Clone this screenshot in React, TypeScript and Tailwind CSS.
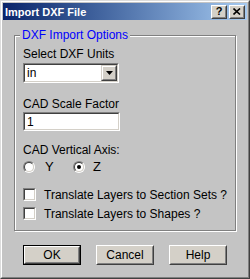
import type { FC, ReactNode } from "react"

// sunken 3D frame used by edit boxes, combo and checkboxes
const Sunken: FC<{ className?: string; children?: ReactNode }> = ({ className = "", children }) => (
    <div className={`border border-t-[#808080] border-l-[#808080] border-b-white border-r-white ${className}`}>
        <div className="w-full h-full border border-t-[#404040] border-l-[#404040] border-b-[#d4d0c8] border-r-[#d4d0c8] bg-white flex items-center">
            {children}
        </div>
    </div>
)

const Radio: FC<{ checked?: boolean }> = ({ checked }) => (
    <div className="w-[12px] h-[12px] rounded-full border border-t-[#808080] border-l-[#808080] border-b-white border-r-white">
        <div className="w-full h-full rounded-full border border-t-[#404040] border-l-[#404040] border-b-[#d4d0c8] border-r-[#d4d0c8] bg-white flex items-center justify-center">
            {checked && <div className="w-[4px] h-[4px] rounded-full bg-black" />}
        </div>
    </div>
)

const Button: FC<{ label: string; isDefault?: boolean }> = ({ label, isDefault }) => (
    <div className={`w-[58px] h-[20px] ${isDefault ? "border border-black" : ""}`}>
        <div className="w-full h-full border border-t-white border-l-white border-b-[#404040] border-r-[#404040] bg-[#d4d0c8]">
            <div className="w-full h-full border border-t-[#d4d0c8] border-l-[#d4d0c8] border-b-[#808080] border-r-[#808080] flex items-center justify-center text-black">
                {label}
            </div>
        </div>
    </div>
)

const CaptionButton: FC<{ children: ReactNode }> = ({ children }) => (
    <div className="w-[16px] h-[14px] border border-t-white border-l-white border-b-[#404040] border-r-[#404040] bg-[#d4d0c8]">
        <div className="w-full h-full border border-t-[#d4d0c8] border-l-[#d4d0c8] border-b-[#808080] border-r-[#808080] flex items-center justify-center">
            {children}
        </div>
    </div>
)

export default function App() {
    return (
        <div className="w-[250px] h-[279px] bg-[#c4c4c4] border border-t-[#dcdcdc] border-l-[#dcdcdc] border-b-[#404040] border-r-[#404040] font-['Liberation_Sans',Arial,sans-serif] text-[12px] leading-[14px] text-black">
            <div className="w-full h-full border border-t-white border-l-white border-b-[#808080] border-r-[#808080] p-[1px] flex flex-col">
                {/* title bar */}
                <div className="h-[17px] bg-gradient-to-r from-[#0a246a] to-[#a6caf0] flex items-center pl-[2px] pr-[2px]">
                    <span className="font-bold text-white text-[11px]">Import DXF File</span>
                    <div className="ml-auto flex gap-[2px]">
                        <CaptionButton>
                            <span className="font-bold text-[11px] leading-[11px]">?</span>
                        </CaptionButton>
                        <CaptionButton>
                            <svg width="8" height="7" viewBox="0 0 8 7">
                                <path d="M0.5 0.5 L7 6.5 M7 0.5 L0.5 6.5" stroke="#000" strokeWidth="1.6" />
                            </svg>
                        </CaptionButton>
                    </div>
                </div>

                {/* group box */}
                <fieldset className="mx-[11px] mt-[8px] border border-[#808080] shadow-[inset_1px_1px_0_#fff,1px_1px_0_#fff] px-[8px] pt-[5px] pb-[9px]">
                    <legend className="ml-[-3px] px-[2px] bg-[#c4c4c4] text-[#0000ff]">DXF Import Options</legend>

                    <div>Select DXF Units</div>
                    <Sunken className="mt-[2px] w-[96px] h-[20px]">
                        <span className="pl-[2px] flex-1">in</span>
                        <div className="w-[16px] h-full border border-t-[#d4d0c8] border-l-[#d4d0c8] border-b-[#404040] border-r-[#404040] bg-[#d4d0c8]">
                            <div className="w-full h-full border border-t-white border-l-white border-b-[#808080] border-r-[#808080] flex items-center justify-center">
                                <svg width="7" height="4" viewBox="0 0 7 4">
                                    <path d="M0 0 H7 L3.5 4 Z" fill="#000" />
                                </svg>
                            </div>
                        </div>
                    </Sunken>

                    <div className="mt-[14px]">CAD Scale Factor</div>
                    <Sunken className="mt-[1px] w-[97px] h-[19px]">
                        <span className="pl-[2px]">1</span>
                    </Sunken>

                    <div className="mt-[12px]">CAD Vertical Axis:</div>
                    <div className="mt-[2px] h-[16px] flex items-center text-[13px]">
                        <div className="w-[50px] flex items-center gap-[10px]">
                            <Radio />
                            <span>Y</span>
                        </div>
                        <div className="flex items-center gap-[8px]">
                            <Radio checked />
                            <span>Z</span>
                        </div>
                    </div>

                    <div className="mt-[12px] h-[15px] flex items-center gap-[8px]">
                        <Sunken className="w-[13px] h-[13px]" />
                        <span>Translate Layers to Section Sets ?</span>
                    </div>
                    <div className="mt-[4px] h-[15px] flex items-center gap-[8px]">
                        <Sunken className="w-[13px] h-[13px]" />
                        <span>Translate Layers to Shapes ?</span>
                    </div>
                </fieldset>

                {/* dialog buttons */}
                <div className="mt-[14px] pl-[20px] flex gap-[15px]">
                    <Button label="OK" isDefault />
                    <Button label="Cancel" />
                    <Button label="Help" />
                </div>
            </div>
        </div>
    )
}
